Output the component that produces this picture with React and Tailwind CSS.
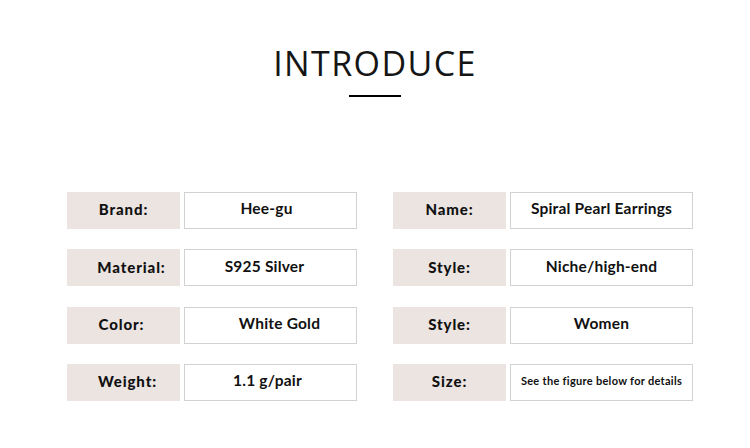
const LEFT = [
  { label: "Brand:", value: "Hee-gu", vshift: "pr-[8px]" },
  { label: "Material:", value: "S925 Silver", lshift: "pl-[16px]", vshift: "pr-[12px]" },
  { label: "Color:", value: "White Gold", lshift: "pr-[4px]", vshift: "pl-[18px]" },
  { label: "Weight:", value: "1.1 g/pair", lshift: "pl-[8px]", vshift: "pr-[6px]" },
];

const RIGHT = [
  { label: "Name:", value: "Spiral Pearl Earrings" },
  { label: "Style:", value: "Niche/high-end" },
  { label: "Style:", value: "Women" },
  { label: "Size:", value: "See the figure below for details", small: true },
];

function Row({ label, value, lshift, vshift, small, valueWidth }) {
  return (
    <div className="flex gap-[4px] h-[37px]">
      <div
        className={`w-[113px] bg-[#ebe4e1] flex items-center justify-center pb-[2px] text-[15px] font-black text-[#111] tracking-[0.9px] ${
          lshift || ""
        }`}
      >
        {label}
      </div>
      <div
        className={`${valueWidth} border border-[#d2d2d2] bg-white flex items-center justify-center pb-[3px] font-bold text-[#111] ${
          small ? "text-[11px] tracking-[0.3px]" : "text-[15.5px] tracking-[0.2px]"
        } ${vshift || ""}`}
      >
        {value}
      </div>
    </div>
  );
}

export default function App() {
  return (
    <div className="w-[750px] h-[448px] bg-white font-['Lato','Open_Sans',sans-serif] overflow-hidden">
      <div className="flex flex-col items-center pt-[41px]">
        <h1 className="font-['Open_Sans',sans-serif] text-[34px] leading-[44px] tracking-[1.4px] text-[#151515] font-normal">
          INTRODUCE
        </h1>
        <div className="w-[52px] h-[2px] bg-black mt-[10px]" />
      </div>

      <div className="flex pl-[67px] gap-[36px] mt-[95px]">
        <div className="flex flex-col gap-[20.3px]">
          {LEFT.map((r, i) => (
            <Row key={i} {...r} valueWidth="w-[173px]" />
          ))}
        </div>
        <div className="flex flex-col gap-[20.3px]">
          {RIGHT.map((r, i) => (
            <Row key={i} {...r} valueWidth="w-[183px]" />
          ))}
        </div>
      </div>
    </div>
  );
}
